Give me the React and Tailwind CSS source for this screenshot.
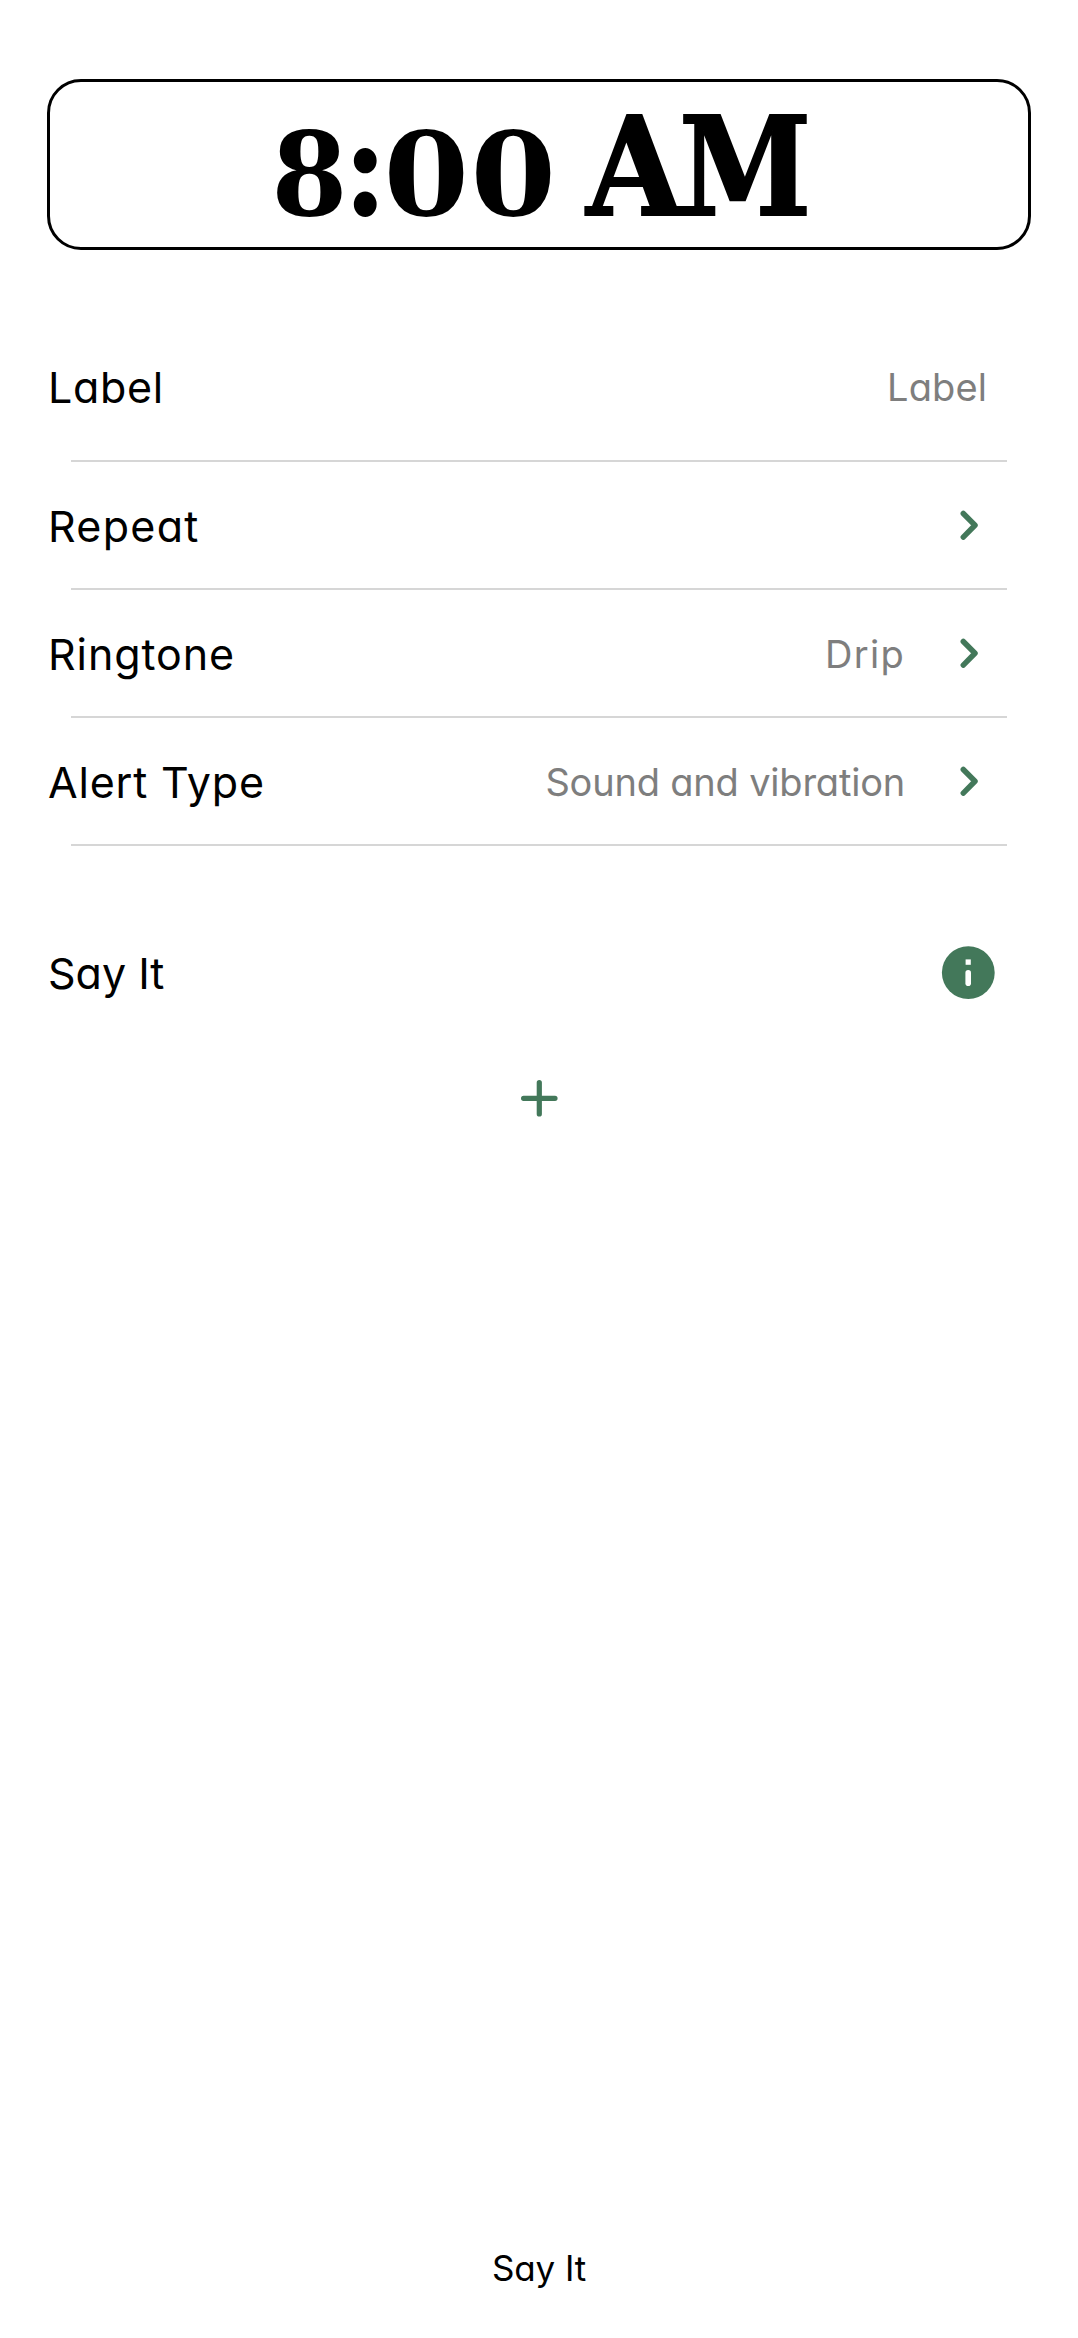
import React from "react";

const GREEN = "#43785a";

const time = [
  { ch: "8", cell: "w-[87px] text-[116px]", glyph: "scale-x-[.94]" },
  { ch: ":", cell: "w-[24px] text-[137px]", glyph: "scale-x-[.9]" },
  { ch: "0", cell: "w-[98px] text-[116px]", glyph: "scale-x-[1.06]" },
  { ch: "0", cell: "w-[76px] text-[116px]", glyph: "scale-x-[1.06]" },
  { ch: "\u00a0", cell: "w-[32px] text-[116px]", glyph: "" },
  { ch: "A", cell: "w-[103px] text-[136px]", glyph: "scale-x-[.92] [-webkit-text-stroke:2px_black]" },
  { ch: "M", cell: "w-[118px] text-[136px]", glyph: "scale-x-[.88] [-webkit-text-stroke:2px_black]" },
];

function Chevron() {
  return (
    <svg className="mr-[29px] ml-[55px] h-[30px] w-[18px] shrink-0" viewBox="0 0 18 30" fill="none" stroke={GREEN} strokeWidth="5.5" strokeLinecap="round" strokeLinejoin="round">
      <path d="M3.3 3.5 15 15.3 3.3 27.1" />
    </svg>
  );
}

function Row({ label, labelClass, value, valueClass, arrow }) {
  return (
    <div>
      <div className="flex h-[126px] items-center">
        <span className={"pt-[3px] pl-[48px] text-[43px] text-black " + labelClass}>{label}</span>
        <span className={"ml-auto pt-px text-[38px] text-[#7e7e7e] " + (valueClass || "")}>{value}</span>
        {arrow && <Chevron />}
        <span className="w-[71px]" />
      </div>
      <div className="mr-[71px] ml-[71px] h-[2px] bg-[#d6d6d6]" />
    </div>
  );
}

export default function App() {
  return (
    <div className="flex h-[2338px] w-[1078px] flex-col bg-white pt-[79px] font-['Inter',sans-serif] leading-none whitespace-nowrap [font-feature-settings:'cv11']">
      <div className="mr-[47px] ml-[47px] flex h-[171px] items-baseline rounded-[34px] border-[3px] border-black pt-[16px] pl-[216px] font-['DejaVu_Serif',serif] font-bold text-black">
        {time.map((t, i) => (
          <span key={i} className={"flex justify-center " + t.cell}>
            <span className={"inline-block " + t.glyph}>{t.ch}</span>
          </span>
        ))}
      </div>

      <div className="mt-[65px] flex h-[145px] items-center">
        <span className="pl-[48px] text-[43px] tracking-[.7px] text-black">Label</span>
        <span className="mr-[91px] ml-auto pb-[2px] text-[38px] tracking-[.1px] text-[#7e7e7e]">Label</span>
      </div>
      <div className="mr-[71px] ml-[71px] h-[2px] bg-[#d6d6d6]" />
      <Row label="Repeat" labelClass="tracking-[1.3px]" arrow />
      <Row label="Ringtone" labelClass="tracking-[.9px]" value="Drip" valueClass="tracking-[1.3px]" arrow />
      <Row label="Alert Type" labelClass="tracking-[.8px]" value="Sound and vibration" valueClass="tracking-[-.2px]" arrow />

      <div className="mt-[63px] flex h-[128px] items-center justify-between">
        <span className="pl-[48px] text-[43px] text-black">Say It</span>
        <svg className="mr-[83px] size-[54px]" viewBox="0 0 54 54">
          <circle cx="27.3" cy="26.7" r="26.4" fill={GREEN} />
          <rect x="24.6" y="13.4" width="5.2" height="5.4" fill="#fff" />
          <rect x="24.4" y="24" width="5.6" height="16" rx="2.8" fill="#fff" />
        </svg>
      </div>
      <div className="mt-[41px] flex justify-center">
        <svg className="size-[40px]" viewBox="0 0 40 40" stroke={GREEN} strokeWidth="5.2" strokeLinecap="round">
          <path d="M4.6 20.3h31.4M20.3 4.6v31.4" />
        </svg>
      </div>

      <div className="mt-auto mb-[52px] flex justify-center text-[35px] tracking-[-.1px] text-black">Say It</div>
    </div>
  );
}
